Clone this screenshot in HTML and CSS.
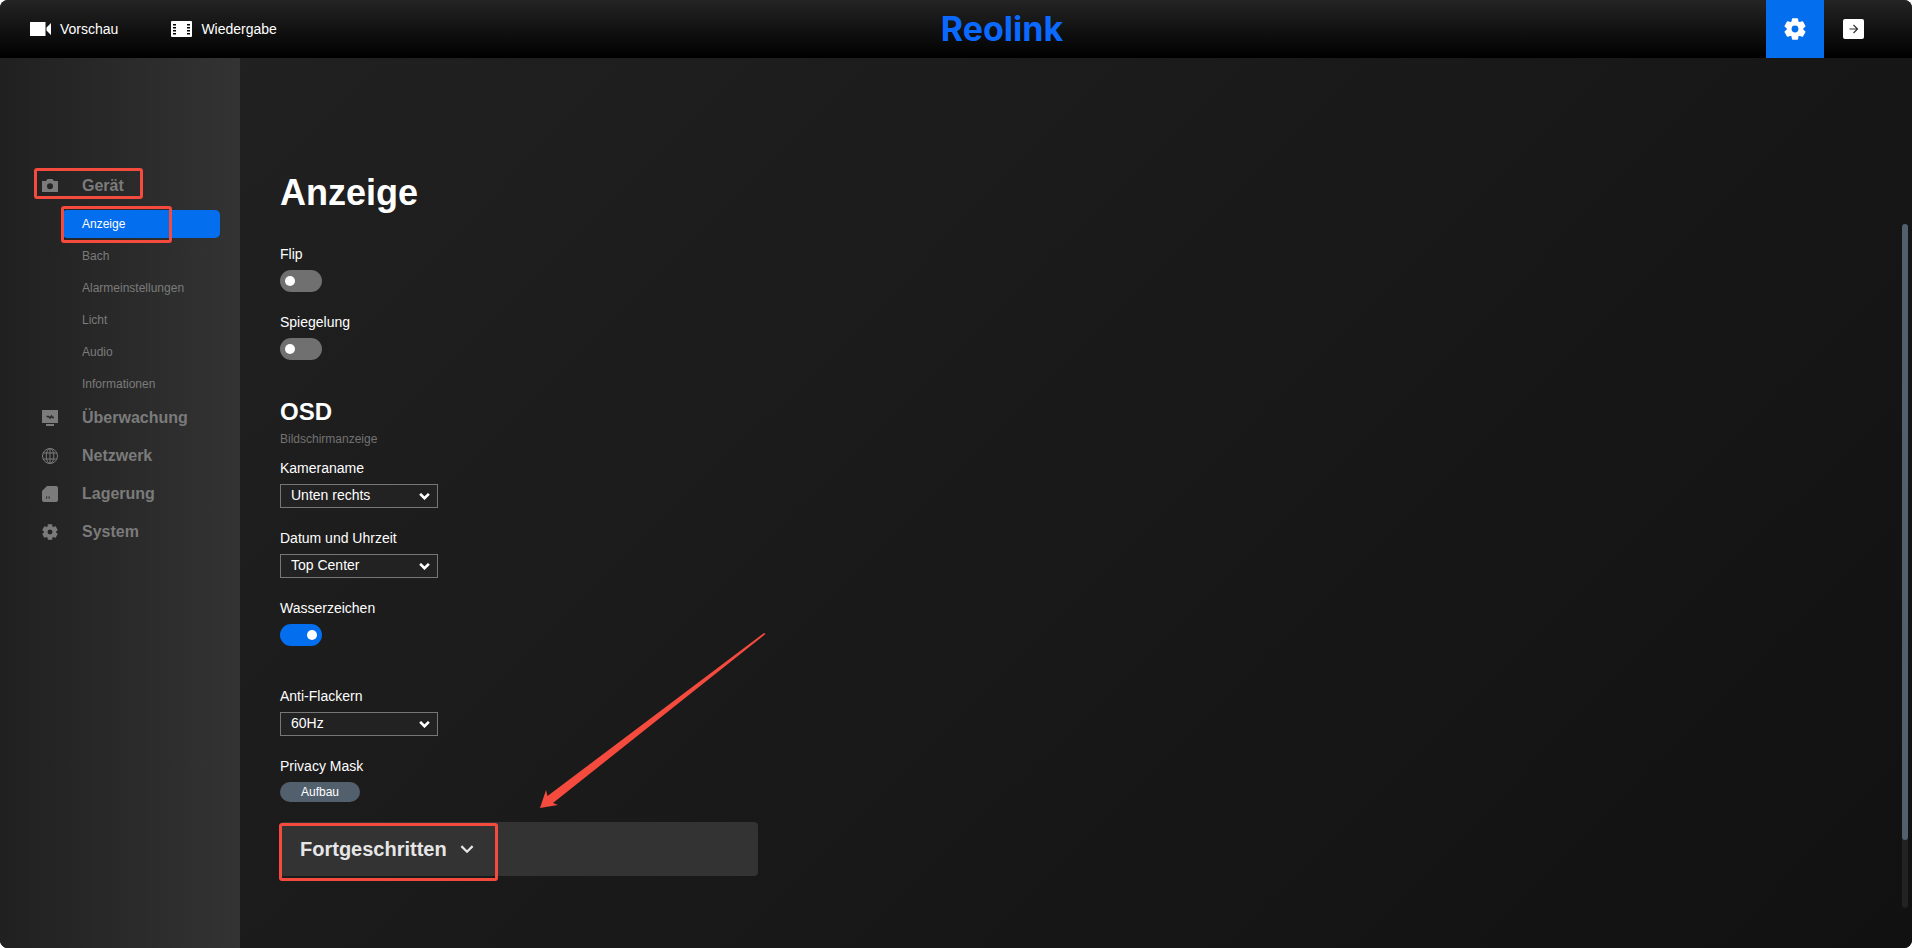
FILE: index.html
```html
<!DOCTYPE html>
<html lang="de">
<head>
    <meta charset="UTF-8">
    <meta name="viewport" content="width=device-width, initial-scale=1.0">
    <title>Reolink - Anzeige</title>
    <link rel="stylesheet" href="styles.css">
</head>
<body>
    <svg class="sprite" aria-hidden="true">
        <symbol id="icon-gear" viewBox="1 1 22 22">
            <path fill="currentColor" fill-rule="evenodd" stroke="currentColor" stroke-width="1.6" stroke-linejoin="round" d="M19.4 13c.1-.3.1-.7.1-1s0-.7-.1-1l2.3-1.8-2.4-4.2-2.8 1.1c-.6-.4-1.1-.8-1.8-1L14.3 2H9.7l-.4 3.1c-.7.2-1.2.6-1.8 1L4.7 5 2.3 9.2 4.6 11c-.1.3-.1.7-.1 1s0 .7.1 1l-2.3 1.8L4.7 19l2.8-1.1c.6.4 1.1.8 1.8 1l.4 3.1h4.6l.4-3.1c.7-.2 1.2-.6 1.8-1l2.8 1.1 2.4-4.2zM12 16.2a4.2 4.2 0 1 1 0-8.4 4.2 4.2 0 0 1 0 8.4z"/>
        </symbol>
        <symbol id="icon-chevron" viewBox="0 0 12 8">
            <path fill="none" stroke="currentColor" d="M1 1l5 5 5-5"/>
        </symbol>
    </svg>

    <header class="topbar">
        <nav class="topnav">
            <a class="topnav-link" href="#">
                <svg width="21" height="14" viewBox="0 0 21 14"><path fill="#fff" d="M0 0h15.5v14H0zM16.5 5.5 21 1v12l-4.5-4.5z"/></svg>
                Vorschau
            </a>
            <a class="topnav-link" href="#">
                <svg width="21" height="16" viewBox="0 0 21 16">
                    <rect width="21" height="16" rx="1" fill="#fff"/>
                    <path fill="#000" d="M2 3h3v1.5H2zM2 6h3v1.5H2zM2 9h3v1.5H2zM2 12h3v1.5H2zM16 3h3v1.5h-3zM16 6h3v1.5h-3zM16 9h3v1.5h-3zM16 12h3v1.5h-3z"/>
                </svg>
                Wiedergabe
            </a>
        </nav>
        <div class="logo">Reolink</div>
        <div class="topbar-actions">
            <button class="topbar-button active" aria-label="Einstellungen">
                <svg width="22" height="22"><use href="#icon-gear"/></svg>
            </button>
            <button class="topbar-button" aria-label="Abmelden">
                <svg width="21" height="20" viewBox="0 0 21 20">
                    <rect width="21" height="20" rx="2" fill="#fff"/>
                    <path fill="none" stroke="#333" stroke-width="1.2" d="M6.5 10H14M10.5 6l4 4-4 4"/>
                </svg>
            </button>
        </div>
    </header>

    <div class="layout">
        <aside class="sidebar">
            <a class="menu-item marked mark-device" href="#">
                <svg width="16" height="16" viewBox="0 0 16 16"><path fill="currentColor" fill-rule="evenodd" d="M0 3h4l1.5-2h5L12 3h4v11H0zM8 5.2a3 3 0 1 0 0 6 3 3 0 0 0 0-6z"/></svg>
                Gerät
            </a>
            <div class="submenu">
                <a class="submenu-item active marked mark-display" href="#">Anzeige</a>
                <a class="submenu-item" href="#">Bach</a>
                <a class="submenu-item" href="#">Alarmeinstellungen</a>
                <a class="submenu-item" href="#">Licht</a>
                <a class="submenu-item" href="#">Audio</a>
                <a class="submenu-item" href="#">Informationen</a>
            </div>
            <a class="menu-item" href="#">
                <svg width="16" height="16" viewBox="0 0 16 16">
                    <path fill="currentColor" d="M0 0h16v13H0zM4 14h8v2H4z"/>
                    <path fill="none" stroke="#2a2a2a" stroke-width="1.5" d="M4.5 6.5h2L8 8l1.5-2 1 1.5H12"/>
                </svg>
                Überwachung
            </a>
            <a class="menu-item" href="#">
                <svg width="16" height="16" viewBox="0 0 16 16" fill="none" stroke="currentColor">
                    <circle cx="8" cy="8" r="7.5"/>
                    <ellipse cx="8" cy="8" rx="3.8" ry="7.5"/>
                    <path d="M8 0v16M1 5h14M1 11h14"/>
                </svg>
                Netzwerk
            </a>
            <a class="menu-item" href="#">
                <svg width="16" height="16" viewBox="0 0 16 16">
                    <path fill="currentColor" d="M5 0h9a2 2 0 0 1 2 2v12a2 2 0 0 1-2 2H2a2 2 0 0 1-2-2V5z"/>
                    <path fill="#2a2a2a" d="M4 10.5h1.2v2H4zM6.5 10.5h1.2v2H6.5z"/>
                </svg>
                Lagerung
            </a>
            <a class="menu-item" href="#">
                <svg width="16" height="16"><use href="#icon-gear"/></svg>
                System
            </a>
        </aside>

        <main class="content">
            <h1>Anzeige</h1>
            <div class="fields">
                <div class="field">
                    <label for="flip">Flip</label>
                    <input class="toggle" type="checkbox" id="flip">
                </div>
                <div class="field">
                    <label for="mirror">Spiegelung</label>
                    <input class="toggle" type="checkbox" id="mirror">
                </div>
            </div>

            <h2>OSD</h2>
            <p class="hint">Bildschirmanzeige</p>
            <div class="fields">
                <div class="field">
                    <label for="camera-name">Kameraname</label>
                    <div class="select">
                        <select id="camera-name"><option>Unten rechts</option></select>
                        <svg width="11" height="7"><use href="#icon-chevron"/></svg>
                    </div>
                </div>
                <div class="field">
                    <label for="date-time">Datum und Uhrzeit</label>
                    <div class="select">
                        <select id="date-time"><option>Top Center</option></select>
                        <svg width="11" height="7"><use href="#icon-chevron"/></svg>
                    </div>
                </div>
                <div class="field">
                    <label for="watermark">Wasserzeichen</label>
                    <input class="toggle" type="checkbox" id="watermark" checked>
                </div>
            </div>

            <div class="fields general">
                <div class="field">
                    <label for="anti-flicker">Anti-Flackern</label>
                    <div class="select">
                        <select id="anti-flicker"><option>60Hz</option></select>
                        <svg width="11" height="7"><use href="#icon-chevron"/></svg>
                    </div>
                </div>
                <div class="field">
                    <label for="privacy-mask">Privacy Mask</label>
                    <button class="pill" id="privacy-mask">Aufbau</button>
                </div>
                <div class="advanced">
                    <button class="advanced-toggle marked mark-advanced">
                        Fortgeschritten
                        <svg width="14" height="9"><use href="#icon-chevron"/></svg>
                    </button>
                    <svg class="arrow" width="226" height="176" viewBox="0 0 226 176" aria-hidden="true">
                        <path fill="#f44b3e" d="M0 176 6 158l1.5 6L224 1l1.5 1L13 171l5 2z"/>
                    </svg>
                </div>
            </div>
        </main>

        <div class="scrollbar"><div class="scrollbar-thumb"></div></div>
    </div>
</body>
</html>
```

FILE: styles.css
```css
*,
*::before,
*::after {
    box-sizing: border-box;
}

html {
    background-color: #fff;
}

body {
    display: flex;
    flex-direction: column;
    min-height: 100vh;
    margin: 0;
    border-radius: 8px;
    overflow: hidden;
    background-color: #1a1a1a;
    color: #fff;
    font-family: "Liberation Sans", Arial, sans-serif;
    font-size: 14px;
    line-height: 20px;
}

a {
    color: inherit;
    text-decoration: none;
}

button,
select {
    font-family: inherit;
    color: inherit;
    border: none;
    cursor: pointer;
}

.sprite {
    display: none;
}

/* Top bar */
.topbar {
    display: grid;
    grid-template-columns: 1fr auto 1fr;
    height: 58px;
    padding: 0 30px;
    background: linear-gradient(#242424, #000);
}

.topnav {
    display: flex;
    align-items: center;
    gap: 53px;
}

.topnav-link {
    display: flex;
    align-items: center;
    gap: 9px;
}

.logo {
    margin-left: 92px;
    color: #0b69ff;
    font-family: Inter, sans-serif;
    font-size: 34px;
    font-weight: 700;
    line-height: 58px;
}

.topbar-actions {
    display: flex;
    justify-content: flex-end;
}

.topbar-button {
    display: flex;
    align-items: center;
    justify-content: center;
    width: 58px;
    padding: 0;
    background: none;
}

.topbar-button.active {
    background-color: #036eee;
}

/* Red frames around the steps */
.marked {
    position: relative;
}

.marked::after {
    content: "";
    position: absolute;
    border: 3px solid #f44b3e;
    border-radius: 3px;
}

.mark-device::after {
    left: 34px;
    top: 1px;
    width: 109px;
    height: 31px;
}

.mark-display::after {
    left: -1px;
    top: -4px;
    width: 111px;
    height: 37px;
}

.mark-advanced::after {
    left: -1px;
    top: 1px;
    width: 219px;
    height: 58px;
}

.layout {
    display: flex;
    flex: 1;
    background: linear-gradient(135deg, #222, #111);
}

/* Sidebar */
.sidebar {
    width: 240px;
    padding-top: 109px;
    background: linear-gradient(to right, #202020, #333);
    color: #7b7b7b;
}

.menu-item {
    display: flex;
    align-items: center;
    gap: 24px;
    height: 38px;
    padding-left: 42px;
    font-size: 16px;
    font-weight: bold;
}

.submenu {
    display: flex;
    flex-direction: column;
    gap: 4px;
    padding: 5px 20px 1px 62px;
}

.submenu-item {
    padding-left: 20px;
    border-radius: 5px;
    font-size: 12px;
    line-height: 28px;
}

.submenu-item.active {
    background-color: #036eee;
    color: #fff;
}

/* Settings */
.content {
    flex: 1;
    padding: 114px 40px 20px;
}

h1 {
    margin: 0 0 30px;
    font-size: 36px;
    line-height: 42px;
}

h2 {
    margin: 37px 0 4px;
    font-size: 24px;
    line-height: 30px;
}

.hint {
    margin: 0 0 11px;
    color: #727272;
    font-size: 12px;
    line-height: 16px;
}

.fields {
    display: flex;
    flex-direction: column;
    gap: 20px;
}

.general {
    margin-top: 40px;
}

.field {
    display: flex;
    flex-direction: column;
    align-items: flex-start;
    gap: 6px;
}

.toggle {
    display: flex;
    align-items: center;
    width: 42px;
    height: 22px;
    margin: 0;
    padding: 0 5px;
    appearance: none;
    border-radius: 11px;
    background-color: #707070;
    cursor: pointer;
}

.toggle::before {
    content: "";
    width: 10px;
    height: 10px;
    border-radius: 50%;
    background-color: #fff;
}

.toggle:checked {
    justify-content: flex-end;
    background-color: #036eee;
}

.select {
    display: grid;
    align-items: center;
    width: 158px;
}

.select select,
.select svg {
    grid-area: 1 / 1;
}

.select select {
    height: 24px;
    padding: 0 10px 2px;
    appearance: none;
    border: 1px solid #777;
    background-color: #222;
    font-size: 14px;
}

.select svg {
    justify-self: end;
    margin-right: 8px;
    stroke-width: 3px;
    pointer-events: none;
}

.pill {
    width: 80px;
    height: 20px;
    padding: 0;
    border-radius: 10px;
    background-color: #52606d;
    font-size: 12px;
}

.advanced {
    position: relative;
    width: 478px;
    max-width: 100%;
    border-radius: 4px;
    background-color: #333;
}

.advanced-toggle {
    display: flex;
    align-items: center;
    gap: 13px;
    height: 54px;
    padding: 0 20px;
    background: none;
    color: #e6e6e6;
    font-size: 20px;
    font-weight: bold;
}

.advanced-toggle svg {
    stroke-width: 2px;
}

.arrow {
    position: absolute;
    left: 260px;
    bottom: 68px;
}

.scrollbar {
    width: 6px;
    margin: 166px 4px 40px 0;
    border-radius: 3px;
    background-color: #222;
}

.scrollbar-thumb {
    height: 90%;
    border-radius: 3px;
    background-color: #52606d;
}
```
